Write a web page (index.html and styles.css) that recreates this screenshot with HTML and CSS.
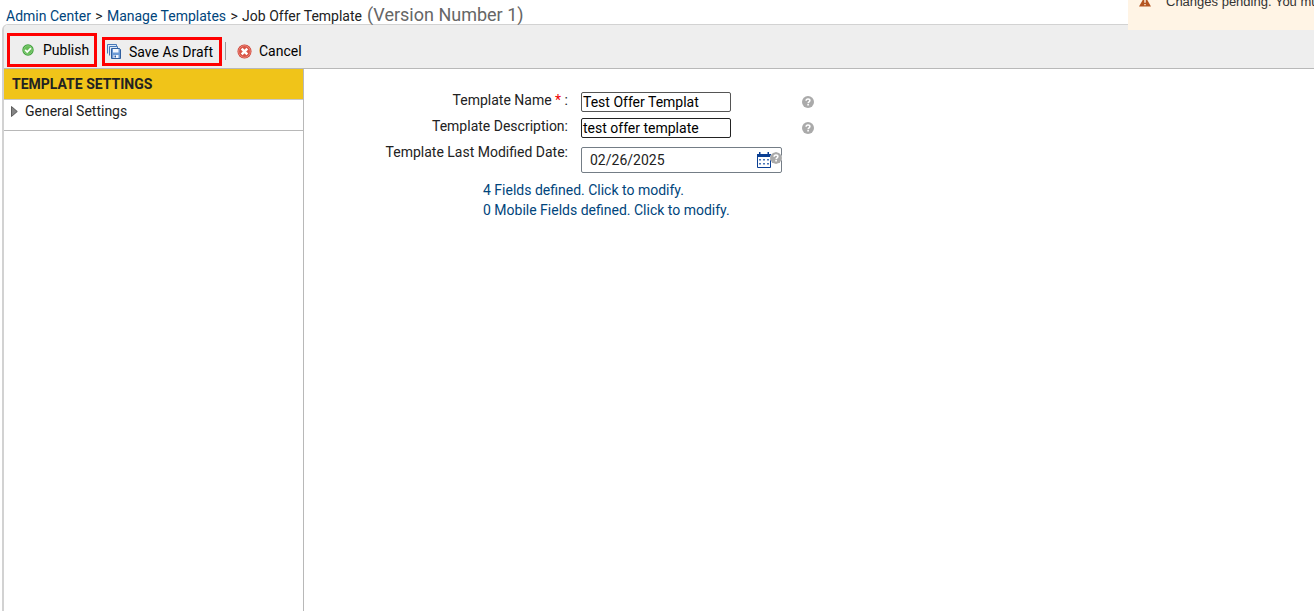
FILE: index.html
```html
<!DOCTYPE html>
<html lang="en">
<head>
<meta charset="utf-8">
<title>Job Offer Template</title>
<link rel="stylesheet" href="styles.css">
</head>
<body>
<nav class="crumbs"><a class="c1">Admin Center</a><span class="sep">&gt;</span><a class="c2">Manage Templates</a><span class="sep">&gt;</span><span class="c3">Job Offer Template</span><span class="version">(Version Number 1)</span></nav>
<div class="panel">
  <div class="toolbar">
    <button class="tool publish">
      <svg width="12" height="12" viewBox="0 0 12 12"><circle cx="6" cy="6" r="5.7" fill="#42a33c"/><circle cx="6" cy="6" r="4.3" fill="#67bd58" stroke="#a1d898" stroke-width=".6"/><path d="M3.2 5.9l2 2.1 3.7-3.8" fill="none" stroke="#fff" stroke-width="1.7"/></svg>
      <span>Publish</span>
    </button>
    <button class="tool draft">
      <svg width="14" height="15" viewBox="0 0 14 15"><path d="M.5 9.5v-9h9v2M2.5 11.500v-9h8v2" fill="#dce9f8" stroke="#4778b8"/><path d="M4.500 4.500h8l1 1v9h-9z" fill="#6d9bd5" stroke="#315f9f"/><path d="M6 5h5.500v3.500H6zM6.500 11h5v3h-5z" fill="#f5f9ff"/><path d="M7.500 11.500h1.500v2H7.500z" fill="#315f9f"/></svg>
      <span>Save As Draft</span>
    </button>
    <i class="divider"></i>
    <button class="tool cancel">
      <svg width="15" height="15" viewBox="0 0 15 15"><circle cx="7.500" cy="7.500" r="7" fill="#cf3d30"/><circle cx="7.500" cy="7.500" r="5.900" fill="#d95446" stroke="#f0a297" stroke-width=".7"/><path d="M4.700 4.700l5.600 5.600M10.300 4.700l-5.600 5.600" stroke="#fff" stroke-width="2.500"/></svg>
      <span>Cancel</span>
    </button>
  </div>
  <div class="columns">
    <aside class="sidebar">
      <h2 class="side-title"><span>TEMPLATE SETTINGS</span></h2>
      <div class="side-item"><svg width="7" height="11" viewBox="0 0 7 11"><path d="M.5.5v10L6.300 5.500z" fill="#858585" stroke="#444" stroke-width=".8"/></svg><span>General Settings</span></div>
    </aside>
    <main class="content">
      <div class="row"><label class="l1">Template Name <b class="req">*</b> :</label><div class="box name"><span>Test Offer Templat</span></div><svg class="help" width="12" height="12" viewBox="0 0 12 12"><use href="#q"/></svg></div>
      <div class="row"><label class="l2">Template Description:</label><div class="box desc"><span>test offer template</span></div><svg class="help" width="12" height="12" viewBox="0 0 12 12"><g id="q"><circle cx="6" cy="6" r="6" fill="#aaa"/><path d="M4.100 4.700c0-2.500 3.800-2.300 3.800-.2 0 1.300-1.800 1.300-1.800 2.700" fill="none" stroke="#fff" stroke-width="1.500"/><path d="M5.300 8h1.600v1.500H5.300z" fill="#fff"/></g></svg></div>
      <div class="row date-row"><label class="l3">Template Last Modified Date:</label><div class="box date"><span>02/26/2025</span>
        <svg class="calendar" width="14" height="16" viewBox="0 0 14 16"><path d="M.5 2.500h13v13H.5z" fill="#fff" stroke="#0a3f93"/><path d="M0 2h14v3H0zM2 0h1.500v3H2zM10.500 0H12v3h-1.500z" fill="#0a3f93"/><path d="M2 7h2v1.500H2zM6 7h2v1.500H6zM10 7h2v1.500h-2zM2 11h2v1.500H2zM6 11h2v1.500H6zM10 11h2v1.500h-2z" fill="#4b77b7"/></svg>
        <svg class="date-help" width="12" height="12" viewBox="0 0 12 12"><use href="#q"/></svg></div></div>
      <div class="links"><a class="k1">4 Fields defined. Click to modify.</a><a class="k2">0 Mobile Fields defined. Click to modify.</a></div>
    </main>
  </div>
</div>
<div class="alert"><svg width="12" height="11" viewBox="0 0 12 11"><path d="M6 0l6 10.500H0z" fill="#b45420"/><path d="M5.300 3.500h1.400v3.300H5.300zM5.300 8h1.400v1.300H5.300z" fill="#fff2e2"/></svg><span>Changes pending. You must save</span></div>
</body>
</html>
```
FILE: styles.css
```css
* { box-sizing: border-box; }
body { margin: 0; height: 611px; overflow: hidden; position: relative; background: #fff; color: #222; font: 14px/20px Roboto, "Noto Sans", sans-serif; }
svg { display: block; flex: none; }
a { color: #00457c; }
.crumbs { height: 24px; padding-left: 6px; display: flex; align-items: baseline; line-height: 32px; white-space: nowrap; }
.sep { width: 16px; text-align: center; }
.version { margin-left: 5px; font-size: 18px; line-height: 30px; color: #666; }
.panel { margin-left: 2px; height: 587px; border-left: 2px solid #d2d2d2; border-top: 1px solid #d2d2d2; border-top-left-radius: 6px; display: flex; flex-direction: column; }
.toolbar { height: 44px; flex: none; background: #eee; border-bottom: 1px solid #b8b8b8; border-top-left-radius: 4px; display: flex; align-items: flex-start; padding-left: 3px; }
.tool { font: inherit; color: #000; background: none; border: 0; padding: 0; display: flex; align-items: center; white-space: nowrap; }
.publish { width: 90px; height: 34px; margin-top: 8px; padding-left: 12px; gap: 9px; border: 3px solid #f00; }
.draft { width: 120px; height: 29px; margin: 12px 0 0 5px; padding-left: 2px; gap: 8px; border: 3px solid #f00; }
.divider { width: 1px; height: 18px; margin: 17px 11px 0 3px; background: #999; }
.cancel { height: 20px; margin-top: 16px; gap: 7px; }
.columns { display: flex; flex: 1; }
.sidebar { width: 300px; border-right: 1px solid #b8b8b8; }
.side-title { margin: 0; height: 31px; padding-left: 8px; background: #f0c419; border-bottom: 1px solid #c8c8c8; font-size: 14px; line-height: 31px; font-weight: 700; }
.side-item { height: 31px; padding: 0 0 8px 7px; gap: 7px; border-bottom: 1px solid #b8b8b8; display: flex; align-items: center; }
.content { padding-top: 23px; }
.row { height: 26px; display: flex; align-items: flex-start; }
.row label { width: 264px; margin-top: -2px; text-align: right; white-space: nowrap; }
.req { color: #e00; font-weight: 400; }
.box { width: 150px; height: 20px; margin-left: 13px; border: 1px solid #555; border-radius: 2px; padding-left: 1px; line-height: 19px; color: #000; white-space: nowrap; }
.desc { border-color: #222; }
.help { margin: 4px 0 0 71px; }
.date-row { height: 36px; }
.date { width: 201px; height: 26px; margin-top: 3px; padding-left: 8px; border-color: #747d86; color: #222; line-height: 25px; display: flex; position: relative; }
.calendar { margin: 4px 10px 0 auto; }
.calendar + .date-help { position: absolute; right: -1px; top: 4px; background: #fff; border-radius: 6px; }
.links { padding-left: 179px; display: flex; flex-direction: column; align-items: flex-start; white-space: nowrap; }
.alert { position: absolute; left: 1128px; top: 0; width: 186px; height: 30px; padding-left: 11px; overflow: hidden; background: #fff4e5; color: #333; font: 13px/20px "Liberation Sans", sans-serif; display: flex; white-space: nowrap; }
.alert svg { margin-top: -4px; }
.alert span { margin: -8px 0 0 15px; }
```
